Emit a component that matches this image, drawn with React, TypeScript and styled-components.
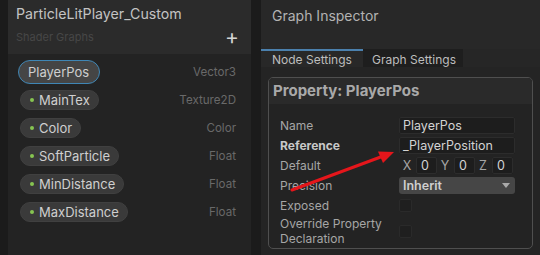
import React from "react";
import styled, { createGlobalStyle } from "styled-components";

const Global = createGlobalStyle`
  html, body { margin: 0; padding: 0; background: #1b1b1b; }
  body { font-family: Inter, "Noto Sans", sans-serif; -webkit-font-smoothing: antialiased; }
  * { box-sizing: border-box; }
`;

const Page = styled.div`
  position: relative;
  width: 540px;
  height: 255px;
  display: flex;
  padding-left: 8px;
  gap: 10px;
  background: #1b1b1b;
  overflow: hidden;
`;

const LeftPanel = styled.div`
  width: 243px;
  display: flex;
  flex-direction: column;
  background: #232323;
`;

const LeftHeader = styled.div`
  height: 54px;
  background: #2b2b2b;
  padding: 5px 12px 0 8px;
  display: flex;
  flex-direction: column;
`;

const Title = styled.div`
  font-size: 14.2px;
  line-height: 18px;
  color: #c3c3c3;
`;

const SubRow = styled.div`
  display: flex;
  align-items: center;
  justify-content: space-between;
  margin-top: 4px;
`;

const Subtitle = styled.div`
  font-size: 11px;
  color: #474747;
`;

const Plus = styled.span`
  font-size: 21px;
  line-height: 20px;
  color: #d4d4d4;
  font-weight: 400;
`;

const List = styled.div`
  padding: 4px 15px 0 0;
  display: flex;
  flex-direction: column;
`;

const Row = styled.div`
  height: 28px;
  display: flex;
  align-items: center;
  justify-content: space-between;
`;

const Pill = styled.div<{ $selected?: boolean }>`
  display: flex;
  align-items: center;
  gap: 5px;
  height: ${(p) => (p.$selected ? "24px" : "20px")};
  margin-left: ${(p) => (p.$selected ? "10px" : "12px")};
  padding: ${(p) => (p.$selected ? "0 10px 0 9px" : "0 8px 0 9px")};
  border-radius: 12px;
  background: ${(p) => (p.$selected ? "#454545" : "#3a3a3a")};
  border: ${(p) => (p.$selected ? "1.5px solid #3f86b5" : "1px solid #404040")};
  font-size: 13px;
  color: #cfcfcf;
`;

const Dot = styled.span`
  width: 4px;
  height: 4px;
  border-radius: 50%;
  background: #86c451;
`;

const TypeLabel = styled.span`
  font-size: 11.6px;
  color: #696969;
`;

const RightPanel = styled.div`
  flex: 1;
  display: flex;
  flex-direction: column;
  background: #242424;
`;

const RightHeader = styled.div`
  height: 49px;
  background: #282828;
  padding: 7px 11px 0;
  font-size: 14px;
  color: #b3b3b3;
`;

const Tabs = styled.div`
  height: 18px;
  display: flex;
  background: #262626;
`;

const Tab = styled.div<{ $active?: boolean }>`
  width: ${(p) => (p.$active ? "102px" : "100px")};
  display: flex;
  align-items: center;
  padding-left: ${(p) => (p.$active ? "11px" : "9px")};
  font-size: 12px;
  color: #bdbdbd;
  background: ${(p) => (p.$active ? "#282828" : "#1e1e1e")};
  border-top: 2px solid ${(p) => (p.$active ? "#4b80ad" : "transparent")};
`;

const Box = styled.div`
  margin: 10px 7px 6px 7px;
  flex: 1;
  border: 1px solid #4f4f4f;
  border-radius: 5px;
  background: #232323;
  display: flex;
  flex-direction: column;
  overflow: hidden;
`;

const BoxTitle = styled.div`
  height: 26px;
  background: #2a2a2a;
  padding: 3px 4px 0;
  font-size: 15px;
  font-weight: 700;
  color: #a9a9a9;
`;

const Props = styled.div`
  padding: 11px 17px 0 11px;
  display: flex;
  flex-direction: column;
`;

const PropRow = styled.div<{ $tall?: boolean }>`
  height: ${(p) => (p.$tall ? "32px" : "20px")};
  display: grid;
  grid-template-columns: 119px 1fr;
  align-items: center;
`;

const Label = styled.span<{ $bold?: boolean }>`
  font-size: 12px;
  line-height: 15px;
  color: ${(p) => (p.$bold ? "#c8c8c8" : "#a6a6a6")};
  font-weight: ${(p) => (p.$bold ? 700 : 400)};
`;

const Field = styled.div`
  height: 17px;
  background: #1d1d1d;
  border: 1px solid #2c2c2c;
  border-radius: 2px;
  padding-left: 3px;
  display: flex;
  align-items: center;
  font-size: 12.5px;
  color: #d3d3d3;
`;

const Vec = styled.div`
  display: flex;
`;

const VecGroup = styled.div`
  display: flex;
  align-items: center;
  gap: 1px;
  width: 38px;
`;

const Axis = styled.span`
  width: 16px;
  text-align: center;
  font-size: 12.5px;
  color: #a6a6a6;
`;

const VecBox = styled(Field)`
  width: 21px;
  padding-left: 4px;
`;

const Dropdown = styled.div`
  height: 17px;
  background: #464646;
  border-radius: 3px;
  padding: 0 5px 0 4px;
  display: flex;
  align-items: center;
  justify-content: space-between;
  font-size: 12.5px;
  font-weight: 600;
  color: #cfcfcf;
`;

const Caret = styled.span`
  width: 0;
  height: 0;
  border-left: 4.5px solid transparent;
  border-right: 4.5px solid transparent;
  border-top: 5px solid #a9a9a9;
`;

const Check = styled.div`
  width: 13px;
  height: 13px;
  background: #1f1f1f;
  border: 1px solid #2a2a2a;
  border-radius: 2px;
`;

const ArrowLayer = styled.svg`
  position: absolute;
  left: 0;
  top: 0;
  pointer-events: none;
`;

const params = [
  { name: "MainTex", type: "Texture2D" },
  { name: "Color", type: "Color" },
  { name: "SoftParticle", type: "Float" },
  { name: "MinDistance", type: "Float" },
  { name: "MaxDistance", type: "Float" },
];

export default function App() {
  return (
    <>
      <Global />
      <Page>
        <LeftPanel>
          <LeftHeader>
            <Title>ParticleLitPlayer_Custom</Title>
            <SubRow>
              <Subtitle>Shader Graphs</Subtitle>
              <Plus>+</Plus>
            </SubRow>
          </LeftHeader>
          <List>
            <Row>
              <Pill $selected>PlayerPos</Pill>
              <TypeLabel>Vector3</TypeLabel>
            </Row>
            {params.map((p) => (
              <Row key={p.name}>
                <Pill>
                  <Dot />
                  {p.name}
                </Pill>
                <TypeLabel>{p.type}</TypeLabel>
              </Row>
            ))}
          </List>
        </LeftPanel>
        <RightPanel>
          <RightHeader>Graph Inspector</RightHeader>
          <Tabs>
            <Tab $active>Node Settings</Tab>
            <Tab>Graph Settings</Tab>
          </Tabs>
          <Box>
            <BoxTitle>Property: PlayerPos</BoxTitle>
            <Props>
              <PropRow>
                <Label>Name</Label>
                <Field>PlayerPos</Field>
              </PropRow>
              <PropRow>
                <Label $bold>Reference</Label>
                <Field>_PlayerPosition</Field>
              </PropRow>
              <PropRow>
                <Label>Default</Label>
                <Vec>
                  {["X", "Y", "Z"].map((a) => (
                    <VecGroup key={a}>
                      <Axis>{a}</Axis>
                      <VecBox>0</VecBox>
                    </VecGroup>
                  ))}
                </Vec>
              </PropRow>
              <PropRow>
                <Label>Precision</Label>
                <Dropdown>
                  Inherit
                  <Caret />
                </Dropdown>
              </PropRow>
              <PropRow>
                <Label>Exposed</Label>
                <Check />
              </PropRow>
              <PropRow $tall>
                <Label>
                  Override Property
                  <br />
                  Declaration
                </Label>
                <Check />
              </PropRow>
            </Props>
          </Box>
        </RightPanel>
        <ArrowLayer width="540" height="255" viewBox="0 0 540 255">
          <line x1="292" y1="190" x2="382" y2="156.5" stroke="#e5161b" strokeWidth="3" strokeLinecap="round" />
          <polygon points="394,152 378,151.5 383,163" fill="#e5161b" />
        </ArrowLayer>
      </Page>
    </>
  );
}
